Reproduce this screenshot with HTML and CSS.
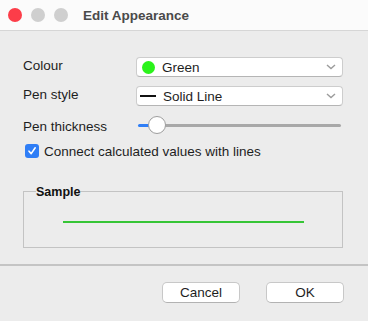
FILE: index.html
```html
<!DOCTYPE html>
<html lang="en">
<head>
  <meta charset="UTF-8" />
  <title>Edit Appearance</title>
  <link rel="stylesheet" href="styles.css">
</head>
<body>
  <div class="window">
    <div class="titlebar">
      <div class="lights">
        <span class="light red"></span>
        <span class="light"></span>
        <span class="light"></span>
      </div>
      <div class="title">Edit Appearance</div>
    </div>

    <div class="content">
      <div class="row">
        <div class="label">Colour</div>
        <div class="combo">
          <span class="swatch"></span>
          <span class="combo-text">Green</span>
          <svg class="chevron" width="10" height="6" viewBox="0 0 10 6"><path d="M1 1 L5 4.5 L9 1" fill="none" stroke="#9c9c9c" stroke-width="1.4"/></svg>
        </div>
      </div>
      <div class="row">
        <div class="label">Pen style</div>
        <div class="combo">
          <span class="pen-line"></span>
          <span class="combo-text">Solid Line</span>
          <svg class="chevron" width="10" height="6" viewBox="0 0 10 6"><path d="M1 1 L5 4.5 L9 1" fill="none" stroke="#9c9c9c" stroke-width="1.4"/></svg>
        </div>
      </div>
      <div class="row slider-row">
        <div class="label">Pen thickness</div>
        <div class="slider">
          <div class="track"></div>
          <div class="thumb"></div>
        </div>
      </div>
      <div class="check-row">
        <span class="checkbox">
          <svg width="10" height="10" viewBox="0 0 10 10"><path d="M2 5.2 L4.2 7.6 L8.2 1.8" fill="none" stroke="#fff" stroke-width="1.6" stroke-linecap="round" stroke-linejoin="round"/></svg>
        </span>
        <span>Connect calculated values with lines</span>
      </div>

      <div class="group">
        <div class="group-title">Sample</div>
        <div class="sample-line"></div>
      </div>
    </div>

    <div class="buttons">
      <button class="btn">Cancel</button>
      <button class="btn">OK</button>
    </div>
  </div>
</body>
</html>
```

FILE: styles.css
```css
body {
  margin: 0;
  font-family: "Liberation Sans", Arial, sans-serif;
  font-size: 13.5px;
  color: #1e1e1e;
  background: #ececec;
}

.window {
  width: 368px;
  height: 321px;
  display: flex;
  flex-direction: column;
  background: #ececec;
}

.titlebar {
  height: 30px;
  background: #fbfbfb;
  border-bottom: 1px solid #d6d6d6;
  display: flex;
  align-items: center;
}

.lights {
  display: flex;
  gap: 9px;
  padding-left: 8px;
}

.light {
  width: 14px;
  height: 14px;
  border-radius: 50%;
  background: #cfcfcf;
}

.light.red {
  background: #fc3d49;
}

.title {
  margin-left: 15px;
  font-weight: bold;
  font-size: 13.5px;
  color: #4a4a4a;
}

.content {
  padding: 26px 25px 0 23px;
  flex: 1;
}

.row {
  display: flex;
  align-items: center;
  height: 20px;
  margin-bottom: 9px;
}

.label {
  width: 113px;
  flex: none;
  margin-top: -3px;
}

.combo {
  flex: 1;
  height: 18px;
  background: #fff;
  border: 1px solid #cdcdcd;
  border-bottom-color: #b5b5b5;
  border-radius: 4px;
  display: flex;
  align-items: center;
  padding-left: 5px;
}

.swatch {
  width: 13px;
  height: 13px;
  border-radius: 50%;
  background: #2bf31b;
  margin-right: 7px;
}

.pen-line {
  width: 16px;
  height: 2px;
  background: #111;
  margin-left: -2px;
  margin-right: 7px;
}

.combo-text {
  flex: 1;
}

.chevron {
  margin-right: 6px;
}

.slider-row {
  margin-bottom: 7px;
}

.slider-row .label {
  margin-top: 2px;
}

.slider {
  flex: 1;
  margin-left: 2px;
  margin-right: 2px;
  height: 20px;
  display: flex;
  align-items: center;
  position: relative;
}

.track {
  width: 100%;
  height: 3px;
  border-radius: 2px;
  background: linear-gradient(to right, #2f7ef6 0, #2f7ef6 11px, #a8a8a8 11px);
}

.thumb {
  position: absolute;
  left: 10px;
  top: 1px;
  width: 16px;
  height: 16px;
  border-radius: 50%;
  background: #fff;
  border: 1px solid #9e9e9e;
}

.check-row {
  display: flex;
  align-items: center;
  height: 18px;
  padding-left: 2px;
}

.checkbox {
  width: 14px;
  height: 14px;
  border-radius: 3px;
  background: #2f7ef6;
  display: flex;
  align-items: center;
  justify-content: center;
  margin-right: 5px;
}

.group {
  margin-top: 31px;
  height: 55px;
  border: 1px solid #c3c3c3;
}

.group-title {
  width: max-content;
  margin-top: -7px;
  margin-left: 12px;
  background: #ececec;
  font-weight: bold;
  font-size: 12.5px;
  line-height: 14px;
  color: #111;
}

.sample-line {
  margin-top: 22px;
  margin-left: 39px;
  width: 241px;
  height: 2px;
  background: #36c536;
}

.buttons {
  border-top: 2px solid #c4c4c4;
  height: 55px;
  display: flex;
  justify-content: flex-end;
  align-items: flex-start;
  gap: 26px;
  padding-right: 24px;
}

.btn {
  margin-top: 16px;
  width: 78px;
  height: 21px;
  background: #fff;
  border: 1px solid #c8c8c8;
  border-bottom-color: #b2b2b2;
  border-radius: 5px;
  font-family: "Liberation Sans", Arial, sans-serif;
  font-size: 13.5px;
  color: #1e1e1e;
  padding: 0;
}
```
